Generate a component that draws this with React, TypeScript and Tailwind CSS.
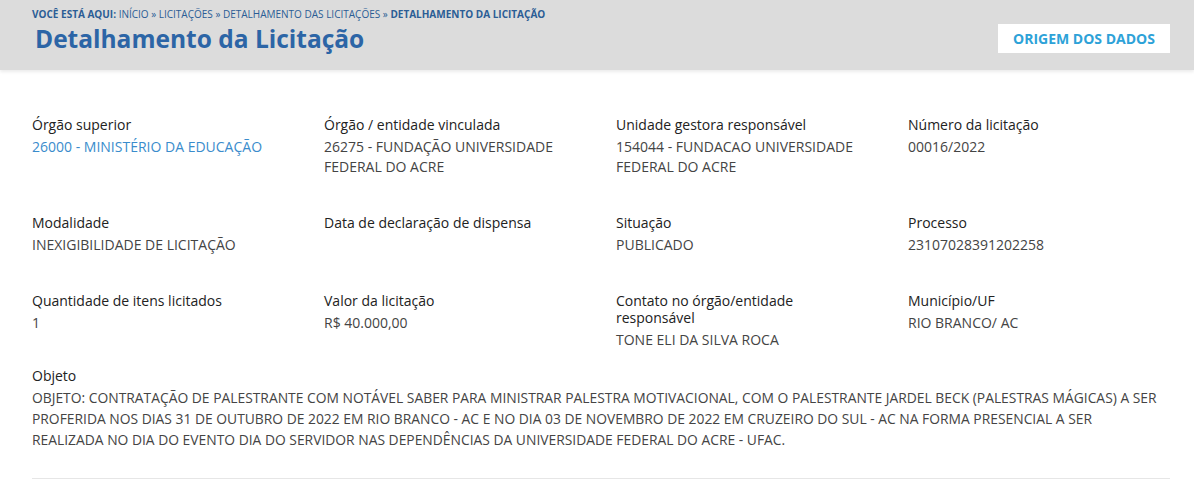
import React from 'react';

type Field = { label: string; value?: string; link?: boolean };

const rows: Field[][] = [
  [
    { label: 'Órgão superior', value: '26000 - MINISTÉRIO DA EDUCAÇÃO', link: true },
    { label: 'Órgão / entidade vinculada', value: '26275 - FUNDAÇÃO UNIVERSIDADE FEDERAL DO ACRE' },
    { label: 'Unidade gestora responsável', value: '154044 - FUNDACAO UNIVERSIDADE FEDERAL DO ACRE' },
    { label: 'Número da licitação', value: '00016/2022' },
  ],
  [
    { label: 'Modalidade', value: 'INEXIGIBILIDADE DE LICITAÇÃO' },
    { label: 'Data de declaração de dispensa' },
    { label: 'Situação', value: 'PUBLICADO' },
    { label: 'Processo', value: '23107028391202258' },
  ],
  [
    { label: 'Quantidade de itens licitados', value: '1' },
    { label: 'Valor da licitação', value: 'R$ 40.000,00' },
    { label: 'Contato no órgão/entidade responsável', value: 'TONE ELI DA SILVA ROCA' },
    { label: 'Município/UF', value: 'RIO BRANCO/ AC' },
  ],
];

const App: React.FC = () => {
  return (
    <div className="min-h-screen bg-white font-['Open_Sans',sans-serif]">
      {/* Header */}
      <div className="bg-[#dcdcdc] h-[70px] shadow-[0_2px_3px_rgba(0,0,0,0.08)] relative">
        <div className="flex items-start justify-between pl-[32px] pr-[24px]">
          <div>
            <div className="pt-[8px] text-[10px] leading-[13px] text-[#2b5d95]">
              <span className="font-bold">VOCÊ ESTÁ AQUI:</span>{' '}
              <span>INÍCIO » LICITAÇÕES » DETALHAMENTO DAS LICITAÇÕES »</span>{' '}
              <span className="font-bold">DETALHAMENTO DA LICITAÇÃO</span>
            </div>
            <h1 className="pl-[3px] mt-[2px] text-[24.5px] leading-[32px] font-bold text-[#2c65a6]">
              Detalhamento da Licitação
            </h1>
          </div>
          <button className="mt-[24px] w-[172px] h-[29px] bg-white text-[#2da2d8] text-[14px] font-bold">
            ORIGEM DOS DADOS
          </button>
        </div>
      </div>

      {/* Body */}
      <div className="pl-[32px] pr-[24px] pt-[46px]">
        {rows.map((row, i) => (
          <div key={i} className="grid grid-cols-[292px_292px_292px_262px] mb-[37px]">
            {row.map((f) => (
              <div key={f.label} className="pr-[40px]">
                <div className="text-[14px] leading-[17px] text-[#222] mb-[4px]">{f.label}</div>
                {f.value && (
                  <div className={`text-[14px] leading-[20px] ${f.link ? 'text-[#3a8ccc]' : 'text-[#444]'}`}>
                    {f.value}
                  </div>
                )}
              </div>
            ))}
          </div>
        ))}
        <div className="-mt-[20px] pr-[6px]">
          <div className="text-[14px] leading-[17px] text-[#222] mb-[3px]">Objeto</div>
          <div className="text-[13.85px] leading-[21px] text-[#444]">
            OBJETO: CONTRATAÇÃO DE PALESTRANTE COM NOTÁVEL SABER PARA MINISTRAR PALESTRA MOTIVACIONAL, COM O PALESTRANTE JARDEL BECK (PALESTRAS MÁGICAS) A SER PROFERIDA NOS DIAS 31 DE OUTUBRO DE 2022 EM RIO BRANCO - AC E NO DIA 03 DE NOVEMBRO DE 2022 EM CRUZEIRO DO SUL - AC NA FORMA PRESENCIAL A SER REALIZADA NO DIA DO EVENTO DIA DO SERVIDOR NAS DEPENDÊNCIAS DA UNIVERSIDADE FEDERAL DO ACRE - UFAC.
          </div>
        </div>
        <div className="mt-[28px] border-t border-[#e6e6e6]" />
      </div>
    </div>
  );
};

export default App;
